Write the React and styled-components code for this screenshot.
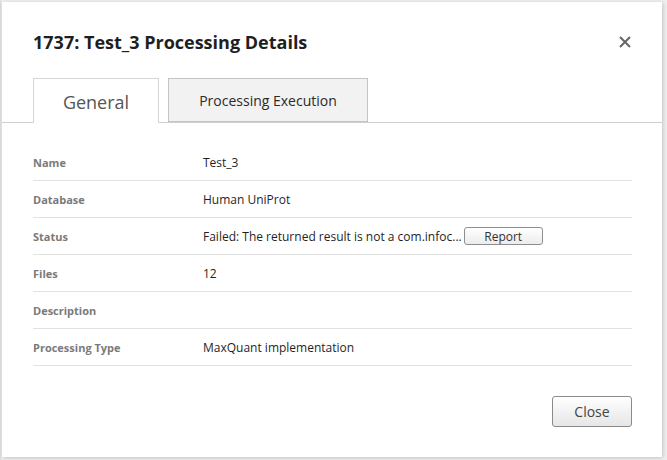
import React, { useState } from "react";
import styled, { createGlobalStyle } from "styled-components";

const Global = createGlobalStyle`
  html, body {
    margin: 0;
    padding: 0;
    background: #e9e9e9;
    font-family: 'Open Sans', 'Liberation Sans', sans-serif;
  }
`;

const Page = styled.div`
  width: 667px;
  height: 460px;
  padding: 2px 5px 3px 2px;
  box-sizing: border-box;
  background: linear-gradient(to right, #d8d8d8 0, #eeeeee 2px, #eeeeee 100%);
`;

const Dialog = styled.div`
  height: 100%;
  background: #fff;
  box-shadow: 1px 1px 4px rgba(0, 0, 0, 0.18);
  display: flex;
  flex-direction: column;
`;

const Header = styled.div`
  display: flex;
  align-items: center;
  justify-content: space-between;
  padding: 26px 29px 0 31px;
  height: 27px;
`;

const Title = styled.h2`
  margin: 0;
  font-size: 18px;
  font-weight: 700;
  color: #1f1f1f;
`;

const CloseX = styled.button`
  border: none;
  background: none;
  padding: 0;
  width: 12px;
  height: 12px;
  margin-right: 2px;
  cursor: pointer;
  display: flex;
`;

const TabBar = styled.div`
  display: flex;
  gap: 9px;
  padding: 0 0 0 31px;
  margin-top: 23px;
  border-bottom: 1px solid #cfcfcf;
  height: 44px;
`;

const Tab = styled.div`
  box-sizing: border-box;
  width: ${p => p.w}px;
  height: ${p => (p.active ? 45 : 44)}px;
  display: flex;
  align-items: center;
  justify-content: center;
  border: 1px solid ${p => (p.active ? "#d6d6d6" : "#c4c4c4")};
  border-bottom: ${p => (p.active ? "none" : "1px solid #c4c4c4")};
  background: ${p => (p.active ? "#fff" : "#f2f2f2")};
  color: ${p => (p.active ? "#555" : "#2a2a2a")};
  font-size: ${p => (p.active ? "18px" : "14px")};
  padding-top: ${p => (p.active ? "1px" : "0")};
  cursor: pointer;
`;

const Body = styled.div`
  padding: 21px 30px 0 31px;
  flex: 1;
`;

const Row = styled.div`
  display: flex;
  align-items: center;
  height: 36px;
  border-bottom: 1px solid #e2e2e2;
`;

const Label = styled.div`
  width: 170px;
  font-size: 11px;
  font-weight: 700;
  color: #7a7a7a;
`;

const Value = styled.div`
  font-size: 12px;
  color: #1f1f1f;
  display: flex;
  align-items: center;
  gap: 2px;
`;

const SmallButton = styled.button`
  width: 79px;
  height: 18px;
  padding: 0;
  font-family: inherit;
  font-size: 12px;
  color: #333;
  border: 1px solid #8e8e8e;
  border-radius: 3px;
  background: linear-gradient(#ffffff, #ececec);
`;

const Footer = styled.div`
  display: flex;
  justify-content: flex-end;
  padding: 0 30px 30px 0;
`;

const CloseButton = styled.button`
  width: 80px;
  height: 31px;
  padding: 0;
  font-family: inherit;
  font-size: 14px;
  color: #444;
  border: 1px solid #8a8a8a;
  border-radius: 3px;
  background: linear-gradient(#ffffff, #e6e6e6);
`;

const rows = [
  ["Name", "Test_3"],
  ["Database", "Human UniProt"],
  ["Status", "Failed: The returned result is not a com.infoc...", true],
  ["Files", "12"],
  ["Description", ""],
  ["Processing Type", "MaxQuant implementation"],
];

export default function App() {
  const [tab, setTab] = useState(0);
  return (
    <Page>
      <Global />
      <Dialog>
        <Header>
          <Title>1737: Test_3 Processing Details</Title>
          <CloseX aria-label="close">
            <svg width="12" height="12" viewBox="0 0 12 12">
              <path d="M1 1 L11 11 M11 1 L1 11" stroke="#666" strokeWidth="2" />
            </svg>
          </CloseX>
        </Header>
        <TabBar>
          <Tab w={126} active={tab === 0} onClick={() => setTab(0)}>General</Tab>
          <Tab w={200} active={tab === 1} onClick={() => setTab(1)}>Processing Execution</Tab>
        </TabBar>
        <Body>
          {rows.map(([k, v, report]) => (
            <Row key={k}>
              <Label>{k}</Label>
              <Value>
                {v}
                {report && <SmallButton>Report</SmallButton>}
              </Value>
            </Row>
          ))}
        </Body>
        <Footer>
          <CloseButton>Close</CloseButton>
        </Footer>
      </Dialog>
    </Page>
  );
}
